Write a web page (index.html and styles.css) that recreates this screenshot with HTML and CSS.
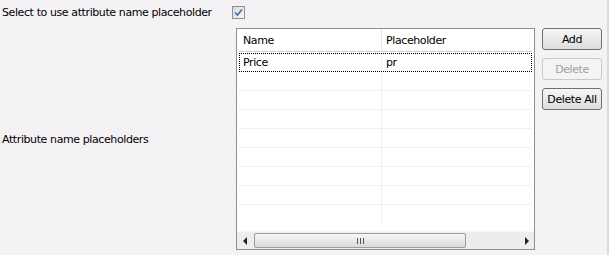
FILE: index.html
```html
<!DOCTYPE html>
<html lang="en">
<head>
    <meta charset="UTF-8">
    <title>Attribute name placeholders</title>
    <link rel="stylesheet" href="styles.css">
</head>
<body>
    <div class="form">
        <div class="form-row top-row">
            <label class="field-label" for="use-placeholder">Select to use attribute name placeholder</label>
            <span class="checkbox checked" id="use-placeholder">
                <svg width="9" height="9" viewBox="0 0 9 9"><path d="M1 4.5 L3.5 7 L8 1.5" fill="none" stroke="#4a64b0" stroke-width="1.6"/></svg>
            </span>
        </div>
        <div class="form-row table-row">
            <div class="field-label middle">Attribute name placeholders</div>
            <div class="grid-box">
                <div class="grid-body">
                    <div class="grid-line header">
                        <div class="cell name">Name</div>
                        <div class="cell">Placeholder</div>
                    </div>
                    <div class="grid-line selected">
                        <div class="cell name">Price</div>
                        <div class="cell">pr</div>
                    </div>
                    <div class="grid-line"><div class="cell name"></div><div class="cell"></div></div>
                    <div class="grid-line"><div class="cell name"></div><div class="cell"></div></div>
                    <div class="grid-line"><div class="cell name"></div><div class="cell"></div></div>
                    <div class="grid-line"><div class="cell name"></div><div class="cell"></div></div>
                    <div class="grid-line"><div class="cell name"></div><div class="cell"></div></div>
                    <div class="grid-line"><div class="cell name"></div><div class="cell"></div></div>
                    <div class="grid-line"><div class="cell name"></div><div class="cell"></div></div>
                    <div class="grid-line last"><div class="cell name"></div><div class="cell"></div></div>
                </div>
                <div class="hscroll">
                    <div class="arrow left"></div>
                    <div class="track">
                        <div class="thumb"><span class="grip"></span></div>
                    </div>
                    <div class="arrow right"></div>
                </div>
            </div>
            <div class="buttons">
                <button class="btn">Add</button>
                <button class="btn" disabled>Delete</button>
                <button class="btn">Delete All</button>
            </div>
        </div>
    </div>
</body>
</html>
```

FILE: styles.css
```css
body {
    margin: 0;
    background: #f5f2f5;
    font-family: Tahoma, "DejaVu Sans", sans-serif;
    font-size: 11px;
    letter-spacing: -0.4px;
    color: #000;
}
.form {
    width: 609px;
    height: 255px;
    border-right: 2px solid #dcd9dc;
    box-sizing: border-box;
}
.form-row {
    display: flex;
}
.top-row {
    height: 24px;
    align-items: center;
}
.field-label {
    width: 232px;
    padding-left: 2px;
    box-sizing: border-box;
    white-space: nowrap;
}
.field-label.middle {
    width: 236px;
    align-self: center;
}
.checkbox {
    width: 11px;
    height: 11px;
    border: 1px solid #8e8f8f;
    background: linear-gradient(135deg, #d8d8d8, #f8f8f8);
    display: flex;
    align-items: center;
    justify-content: center;
}
.table-row {
    padding-top: 4px;
}
.grid-box {
    width: 299px;
    height: 222px;
    border: 1px solid #8f8f8f;
    background: #fff;
    box-sizing: border-box;
    display: flex;
    flex-direction: column;
}
.grid-body {
    flex: 1;
    padding: 0 2px;
}
.grid-line {
    display: flex;
    height: 19px;
    border-bottom: 1px solid #f0f0f0;
    box-sizing: border-box;
}
.grid-line.header {
    height: 23px;
    border-bottom: 1px solid #d5d5d5;
}
.grid-line.last {
    border-bottom: none;
}
.cell {
    flex: 1;
    padding-left: 4px;
    display: flex;
    align-items: center;
}
.cell.name {
    flex: 0 0 138px;
    border-right: 1px solid #f0f0f0;
}
.header .cell.name {
    border-right-color: #e6e6e6;
}
.grid-line.selected {
    margin-top: 1px;
    border: 1px dotted #000;
}
.selected .cell.name {
    padding-left: 3px;
}
.hscroll {
    height: 17px;
    display: flex;
    background: #eeedee;
    border-top: 1px solid #f8f8f8;
}
.arrow {
    width: 17px;
    position: relative;
}
.arrow::after {
    content: "";
    position: absolute;
    top: 5px;
    border-top: 4px solid transparent;
    border-bottom: 4px solid transparent;
}
.arrow.left::after {
    left: 6px;
    border-right: 4px solid #222;
}
.arrow.right::after {
    left: 8px;
    border-left: 4px solid #222;
}
.track {
    flex: 1;
    padding: 1px 0;
}
.thumb {
    width: 212px;
    height: 15px;
    border: 1px solid #9c9c9c;
    border-radius: 2px;
    box-sizing: border-box;
    background: linear-gradient(#f7f7f7, #dadada);
    display: flex;
    align-items: center;
    justify-content: center;
}
.grip {
    width: 7px;
    height: 6px;
    background: repeating-linear-gradient(90deg, #555 0 1px, transparent 1px 3px);
}
.buttons {
    display: flex;
    flex-direction: column;
    gap: 8px;
    padding-left: 7px;
}
.btn {
    width: 60px;
    height: 22px;
    font-family: inherit;
    font-size: 11px;
    letter-spacing: -0.4px;
    color: #000;
    border: 1px solid #707070;
    border-radius: 3px;
    background: linear-gradient(#f6f6f6, #dddddd);
    padding: 0;
}
.btn:disabled {
    color: #a0a0a0;
    border-color: #c8c8c8;
    background: #f4f4f4;
}
```
